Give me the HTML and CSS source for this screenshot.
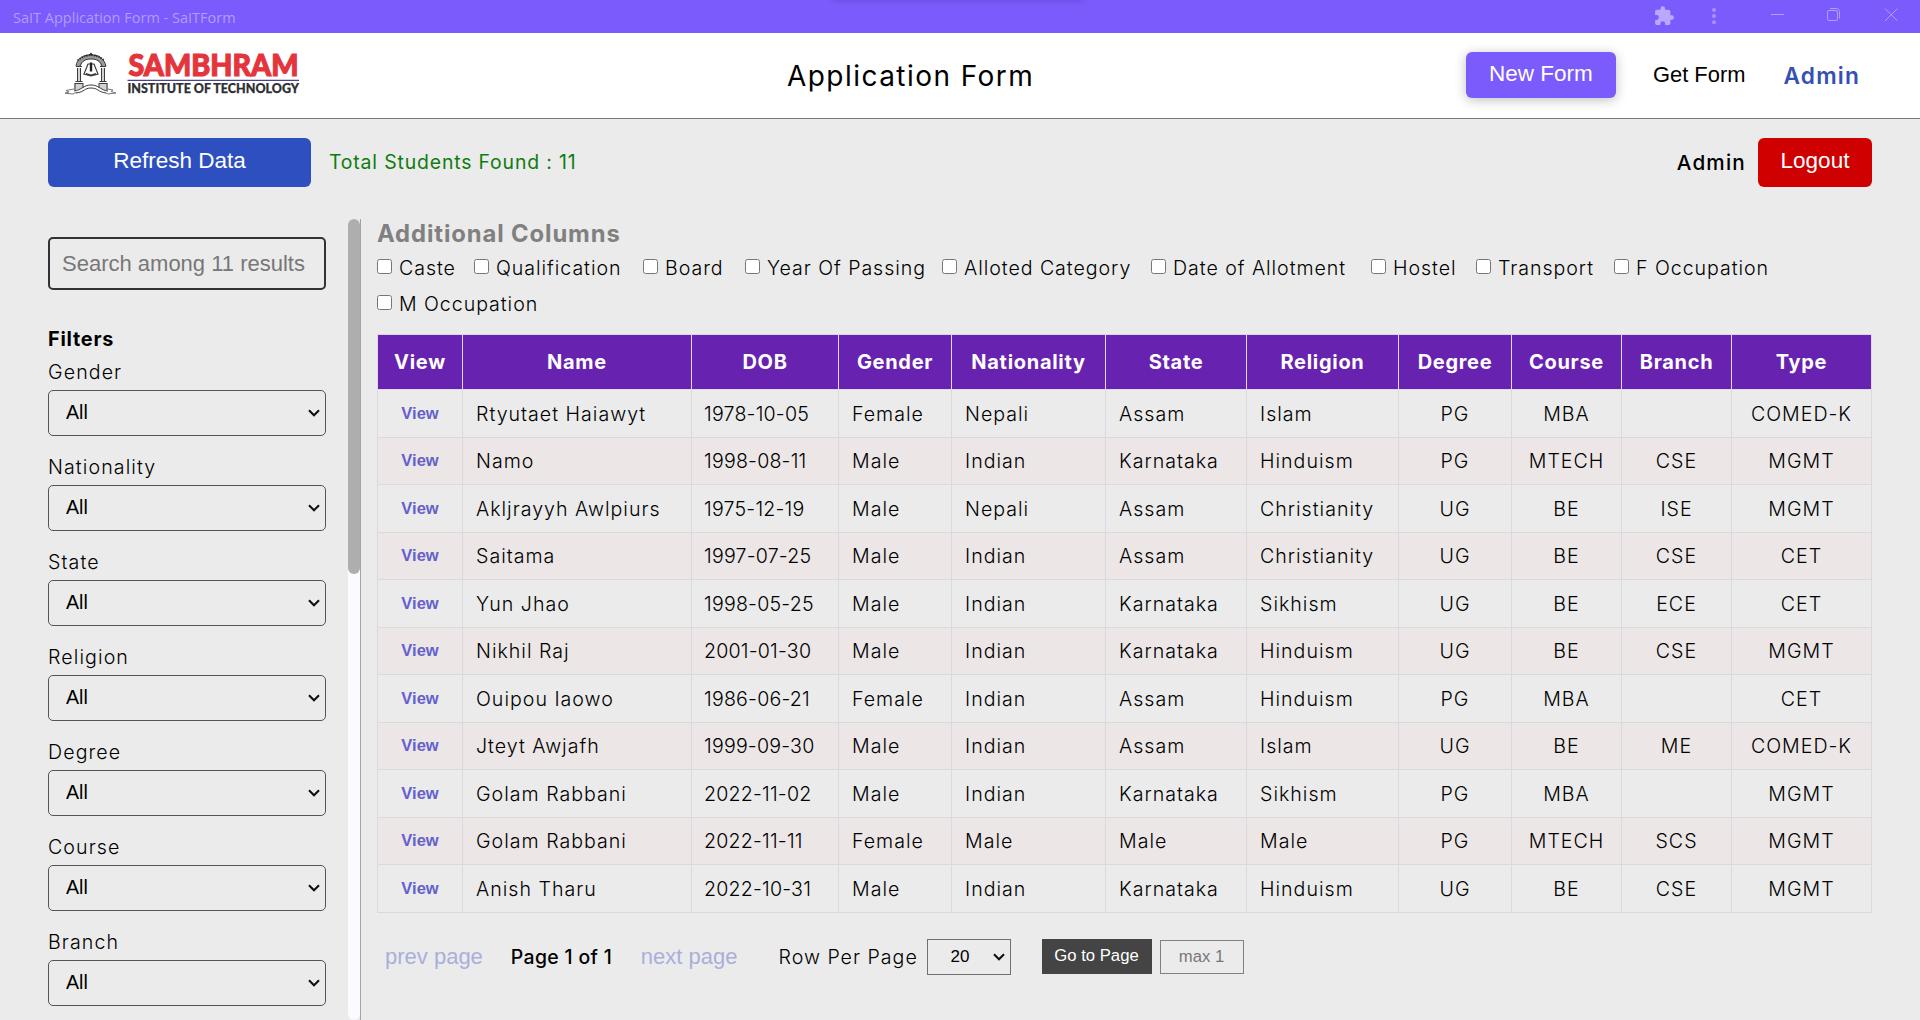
FILE: index.html
```html
<!DOCTYPE html>
<html lang="en">
<head>
<meta charset="utf-8">
<title>SaIT Application Form - SaITForm</title>
<link rel="stylesheet" href="styles.css">
</head>
<body>
<div class="titlebar">
  <span class="titlebar-text">SaIT Application Form - SaITForm</span>
  <span class="titlebar-shade"></span>
  <svg class="titlebar-icons" width="280" height="33" viewBox="1640 0 280 33">
    <path fill="#b9a8fd" transform="translate(1653.3 5.3) scale(.9)" d="M20.5 11H19V7c0-1.1-.9-2-2-2h-4V3.500a2.500 2.500 0 0 0-5 0V5H4c-1.100 0-2 .9-2 2v3.800h1.500a2.700 2.700 0 0 1 0 5.400H2V20c0 1.100.9 2 2 2h3.800v-1.500a2.700 2.700 0 0 1 5.400 0V22H17c1.100 0 2-.9 2-2v-4h1.500a2.500 2.500 0 0 0 0-5z"/>
    <g fill="#a893fd"><circle cx="1714" cy="9.900" r="2"/><circle cx="1714" cy="16" r="2"/><circle cx="1714" cy="22.200" r="2"/></g>
    <g fill="none" stroke="#b09efd" stroke-width="1">
      <path d="M1771 14.500h13"/>
      <rect x="1827.500" y="10.500" width="10" height="10" rx="1.500"/>
      <path d="M1830 8.500h6.500a3 3 0 0 1 3 3v7"/>
      <path d="M1885 8.500l12.500 12.500M1897.500 8.500l-12.500 12.500"/>
    </g>
  </svg>
</div>
<header class="header">
  <svg class="logo" width="240" height="46" viewBox="62 51 240 46">
    <path d="M76 67c0-7 6-12 15-12s15 5 15 12h-5c0-5-4-8-10-8s-10 3-10 8z" fill="#9a9a9a"/>
    <path d="M77 68h4v13h-4zM101 68h4v13h-4zM74 83h9v5l-9 3zM99 83h9v8l-9-3z" fill="#d2d2d2"/>
    <g fill="none" stroke="#3c3c3c" stroke-width="1">
      <path d="M76 66c1-7 6-11 15-11s13 4 15 11M80 66c2-5 5-7 11-7s9 2 11 7"/>
      <path d="M77.500 60.500l6-4 7.500-1.700 7.500 1.700 6 4" stroke-width="2" stroke-dasharray="1.500 1"/>
      <path d="M76 66.500h6M100 66.500h6M77.500 68v13M80.500 68v13M101.500 68v13M104.500 68v13M75.500 81.500h7M99.500 81.500h7M74.500 83.500h9M98.500 83.500h9M75 84v6M83 84v4M99 84v4M107 84v6"/>
      <path d="M84 74l4-10h6l4 10-7 2zM86 73.500l5 1.500 5-1.500" stroke-width="1.200"/>
      <path d="M74 91c8-1 9-6 17-6s9 5 17 6M76 93c9-1 8-5 15-5s7 4 15 5"/>
      <path d="M74 89l-8 1.500 3 1.500-4 1.200 8 .8 4-2M108 89l5 1-2 1.500 5 1.500-8 1-4-2" stroke="#777"/>
    </g>
    <path d="M91 62.500v9" stroke="#222" stroke-width="2.400"/>
    <path d="M89 55l2-2.500 2 2.500zM85 56l1.500-1.500 1.500 1zM94 55.500l1.500-1 1.500 1.500z" fill="#222"/>
    <text class="logo-name" x="128.500" y="76" textLength="170" lengthAdjust="spacingAndGlyphs">SAMBHRAM</text>
    <path d="M127.500 80.300h171.500" stroke="#454392" stroke-width="1.300"/>
    <text class="logo-sub" x="127.500" y="93.300" textLength="171.500" lengthAdjust="spacingAndGlyphs">INSTITUTE OF TECHNOLOGY</text>
  </svg>
  <h1 class="page-title">Application Form</h1>
  <nav class="nav">
    <button class="btn btn-new">New Form</button>
    <a class="nav-link">Get Form</a>
    <a class="nav-admin">Admin</a>
  </nav>
</header>
<div class="toolbar">
  <button class="btn btn-refresh">Refresh Data</button>
  <span class="total">Total Students Found : 11</span>
  <span class="user">Admin</span>
  <button class="btn btn-logout">Logout</button>
</div>
<div class="content">
  <aside class="sidebar">
    <div class="filters">
      <input class="search" type="text" placeholder="Search among 11 results">
      <h2 class="filters-title">Filters</h2>
      <label class="filter"><span>Gender</span><select><option>All</option></select></label>
      <label class="filter"><span>Nationality</span><select><option>All</option></select></label>
      <label class="filter"><span>State</span><select><option>All</option></select></label>
      <label class="filter"><span>Religion</span><select><option>All</option></select></label>
      <label class="filter"><span>Degree</span><select><option>All</option></select></label>
      <label class="filter"><span>Course</span><select><option>All</option></select></label>
      <label class="filter"><span>Branch</span><select><option>All</option></select></label>
    </div>
    <div class="scroll-track"><div class="scroll-thumb"></div></div>
  </aside>
  <main class="main">
    <h2 class="columns-title">Additional Columns</h2>
    <div class="columns">
      <label><input type="checkbox"><span>Caste</span></label>
      <label><input type="checkbox"><span>Qualification</span></label>
      <label><input type="checkbox"><span>Board</span></label>
      <label><input type="checkbox"><span>Year Of Passing</span></label>
      <label><input type="checkbox"><span>Alloted Category</span></label>
      <label><input type="checkbox"><span>Date of Allotment</span></label>
      <label><input type="checkbox"><span>Hostel</span></label>
      <label><input type="checkbox"><span>Transport</span></label>
      <label><input type="checkbox"><span>F Occupation</span></label>
      <label><input type="checkbox"><span>M Occupation</span></label>
    </div>
    <table class="students">
      <colgroup><col class="c-view"><col class="c-name"><col class="c-dob"><col class="c-gender"><col class="c-nation"><col class="c-state"><col class="c-religion"><col class="c-degree"><col class="c-course"><col class="c-branch"><col class="c-type"></colgroup>
      <thead><tr><th>View</th><th>Name</th><th>DOB</th><th>Gender</th><th>Nationality</th><th>State</th><th>Religion</th><th>Degree</th><th>Course</th><th>Branch</th><th>Type</th></tr></thead>
      <tbody>
        <tr><td>View</td><td>Rtyutaet Haiawyt</td><td>1978-10-05</td><td>Female</td><td>Nepali</td><td>Assam</td><td>Islam</td><td>PG</td><td>MBA</td><td></td><td>COMED-K</td></tr>
        <tr><td>View</td><td>Namo</td><td>1998-08-11</td><td>Male</td><td>Indian</td><td>Karnataka</td><td>Hinduism</td><td>PG</td><td>MTECH</td><td>CSE</td><td>MGMT</td></tr>
        <tr><td>View</td><td>Akljrayyh Awlpiurs</td><td>1975-12-19</td><td>Male</td><td>Nepali</td><td>Assam</td><td>Christianity</td><td>UG</td><td>BE</td><td>ISE</td><td>MGMT</td></tr>
        <tr><td>View</td><td>Saitama</td><td>1997-07-25</td><td>Male</td><td>Indian</td><td>Assam</td><td>Christianity</td><td>UG</td><td>BE</td><td>CSE</td><td>CET</td></tr>
        <tr><td>View</td><td>Yun Jhao</td><td>1998-05-25</td><td>Male</td><td>Indian</td><td>Karnataka</td><td>Sikhism</td><td>UG</td><td>BE</td><td>ECE</td><td>CET</td></tr>
        <tr><td>View</td><td>Nikhil Raj</td><td>2001-01-30</td><td>Male</td><td>Indian</td><td>Karnataka</td><td>Hinduism</td><td>UG</td><td>BE</td><td>CSE</td><td>MGMT</td></tr>
        <tr><td>View</td><td>Ouipou Iaowo</td><td>1986-06-21</td><td>Female</td><td>Indian</td><td>Assam</td><td>Hinduism</td><td>PG</td><td>MBA</td><td></td><td>CET</td></tr>
        <tr><td>View</td><td>Jteyt Awjafh</td><td>1999-09-30</td><td>Male</td><td>Indian</td><td>Assam</td><td>Islam</td><td>UG</td><td>BE</td><td>ME</td><td>COMED-K</td></tr>
        <tr><td>View</td><td>Golam Rabbani</td><td>2022-11-02</td><td>Male</td><td>Indian</td><td>Karnataka</td><td>Sikhism</td><td>PG</td><td>MBA</td><td></td><td>MGMT</td></tr>
        <tr><td>View</td><td>Golam Rabbani</td><td>2022-11-11</td><td>Female</td><td>Male</td><td>Male</td><td>Male</td><td>PG</td><td>MTECH</td><td>SCS</td><td>MGMT</td></tr>
        <tr><td>View</td><td>Anish Tharu</td><td>2022-10-31</td><td>Male</td><td>Indian</td><td>Karnataka</td><td>Hinduism</td><td>UG</td><td>BE</td><td>CSE</td><td>MGMT</td></tr>
      </tbody>
    </table>
    <div class="pager">
      <span class="page-link prev">prev page</span>
      <span class="page-now">Page 1 of 1</span>
      <span class="page-link next">next page</span>
      <span class="rows-label">Row Per Page</span>
      <select class="rows-select"><option>20</option></select>
      <button class="go">Go to Page</button>
      <input class="go-input" type="text" placeholder="max 1">
    </div>
  </main>
</div>
</body>
</html>
```
FILE: styles.css
```css
* { box-sizing: border-box; }

body {
  margin: 0;
  height: 1020px;
  overflow: hidden;
  display: flex;
  flex-direction: column;
  background: #ebebeb;
  color: #000;
  font-family: Inter, "Open Sans", sans-serif;
  font-size: 19.6px;
  font-weight: 300;
}

h1, h2 { margin: 0; }
button, input, select { font-family: "Liberation Sans", Arial, sans-serif; }
select {
  appearance: none;
  background: transparent url("data:image/svg+xml,%3Csvg xmlns='http://www.w3.org/2000/svg' width='12' height='8'%3E%3Cpath d='M1 1.2l5 5 5-5' fill='none' stroke='%23111' stroke-width='2.1'/%3E%3C/svg%3E") no-repeat right 5px center;
}

/* Window title bar */
.titlebar {
  position: relative;
  flex: none;
  height: 33px;
  padding-left: 13px;
  display: flex;
  align-items: center;
  justify-content: space-between;
  background: #7b5bfb;
}
.titlebar-text {
  padding-top: 3px;
  color: #b09dfd;
  font: 400 14.5px/20px "Open Sans", sans-serif;
}
.titlebar-shade {
  position: absolute;
  left: 835px;
  top: -4px;
  width: 246px;
  height: 2px;
  box-shadow: 0 0 6px 1px rgba(30, 10, 120, .45);
}

/* Header */
.header {
  flex: none;
  height: 86px;
  padding: 0 60px 0 62px;
  display: grid;
  grid-template-columns: 725px 1fr auto;
  align-items: center;
  background: #fff;
  border-bottom: 1px solid #777c74;
}
.logo { margin-bottom: 4px; overflow: visible; }
.logo-name { font: 900 30.5px Lato, sans-serif; fill: #e4343c; stroke: #e4343c; stroke-width: 1.1px; }
.logo-sub { font: 900 13px Lato, sans-serif; fill: #2e2e32; stroke: #2e2e32; stroke-width: .25px; }
.page-title { font-size: 28px; font-weight: 400; letter-spacing: 1.45px; }
.nav { display: flex; align-items: center; margin-bottom: 1px; }
.nav-link { margin-left: 37px; font: 400 21.9px "Liberation Sans", sans-serif; }
.nav-admin { margin-left: 38px; font-size: 22.7px; font-weight: 600; letter-spacing: 1.2px; color: #3550b4; }

.btn {
  border: 0;
  border-radius: 6px;
  padding: 0 0 3px;
  color: #fff;
  font-size: 22.5px;
}
.btn-new { width: 150px; height: 46px; background: #7b5bfb; box-shadow: 0 2px 12px rgba(0, 0, 0, .25); }
.btn-refresh { width: 263px; height: 49px; background: #2d4fc0; }
.btn-logout { width: 114px; height: 49px; background: #ce0000; }

/* Toolbar */
.toolbar {
  flex: none;
  height: 100px;
  padding: 19px 48px 0;
  display: flex;
  align-items: flex-start;
  line-height: 49px;
}
.total { margin-left: 18px; color: #107c10; font-size: 19.4px; font-weight: 400; letter-spacing: .85px; }
.user { margin-left: auto; margin-right: 12px; font-size: 20.7px; font-weight: 500; letter-spacing: 1.2px; }

.content { flex: 1; min-height: 0; display: flex; }

/* Sidebar */
.sidebar {
  flex: none;
  width: 361px;
  padding-left: 48px;
  display: flex;
  justify-content: space-between;
  border-right: 1px solid #a4a4a4;
}
.filters { width: 278px; padding-top: 18px; }
.search {
  display: block;
  width: 278px;
  height: 53px;
  padding: 0 12px;
  border: 2px solid #333;
  border-radius: 5px;
  background: transparent;
  font-size: 22px;
}
.search::placeholder, .go-input::placeholder { color: #777; }
.filters-title { margin-top: 37px; font-size: 19.8px; font-weight: 700; line-height: 25px; letter-spacing: .8px; }
.filter { display: block; height: 95px; letter-spacing: 1.1px; }
.filter span { display: block; height: 38px; line-height: 40px; }
.filter select {
  display: block;
  width: 278px;
  height: 46px;
  padding: 0 0 2px 17px;
  border: 1px solid #555;
  border-radius: 5px;
  color: #000;
  font-size: 19.6px;
}
.scroll-track { width: 12px; border-radius: 6px; background: #fafbff; }
.scroll-thumb { height: 355px; border-radius: 6px; background: #aeaeae; }

/* Main area */
.main { flex: none; width: 1510px; padding-left: 16px; }
.columns-title { height: 30px; line-height: 30px; font-size: 23.8px; font-weight: 700; letter-spacing: .9px; color: #808080; }
.columns {
  display: grid;
  grid-template-columns: 97px 169px 102px 197px 209px 220px 105px 138px 160px;
  grid-auto-rows: 36px;
  white-space: nowrap;
  letter-spacing: .95px;
}
.columns label { display: flex; align-items: center; }
.columns span { padding-top: 2px; }
.columns input { flex: none; width: 15px; height: 15px; margin: 0 7px 2px 0; }

.students {
  margin-top: 13px;
  width: 1495px;
  table-layout: fixed;
  border-collapse: collapse;
}
.c-view { width: 85px; }
.c-name { width: 229px; }
.c-dob { width: 147px; }
.c-gender { width: 113px; }
.c-nation { width: 154px; }
.c-state { width: 141px; }
.c-religion { width: 152px; }
.c-degree { width: 113px; }
.c-course { width: 110px; }
.c-branch { width: 110px; }
.c-type { width: 140px; }
.students th {
  height: 55px;
  padding: 0;
  border: 1px solid #e2d8ee;
  border-top-color: #dcd4e8;
  background: #6822b0;
  color: #fff;
  font-size: 20px;
  font-weight: 700;
  letter-spacing: .7px;
}
.students td {
  height: 47.5px;
  padding: 1px 0 0 13px;
  border: 1px solid #dadade;
  white-space: nowrap;
  letter-spacing: 1px;
}
.students td:nth-child(3) { padding-left: 12px; letter-spacing: .2px; }
.students td:nth-child(1), .students td:nth-child(n+8) { padding-left: 0; text-align: center; }
.students td:first-child { padding-top: 0; color: #6460cc; font: 700 16.5px "Liberation Sans", sans-serif; letter-spacing: 0; }
.students tbody tr:nth-child(even) { background: #ece6e6; }

/* Pager */
.pager { margin-top: 26px; padding-left: 8px; height: 36px; display: flex; align-items: center; white-space: nowrap; }
.page-link { font: 400 22px "Liberation Sans", sans-serif; color: #a9afdc; }
.page-now { width: 102px; margin: 0 28px; font-size: 19.4px; font-weight: 450; letter-spacing: .35px; }
.rows-label { width: 140px; margin-left: 41px; letter-spacing: 1px; }
.rows-select {
  width: 84px;
  height: 36px;
  margin-left: 8px;
  padding: 0 0 0 23px;
  border: 1px solid #707070;
  border-radius: 0;
  color: #000;
  font-size: 17px;
}
.go { width: 110px; height: 35px; margin-left: 31px; padding: 0 0 1px; border: 0; background: #444; color: #fff; font-size: 16.7px; }
.go-input { width: 84px; height: 34px; margin-left: 8px; padding: 0; border: 1px solid #808080; background: transparent; text-align: center; font-size: 16.7px; }
```
